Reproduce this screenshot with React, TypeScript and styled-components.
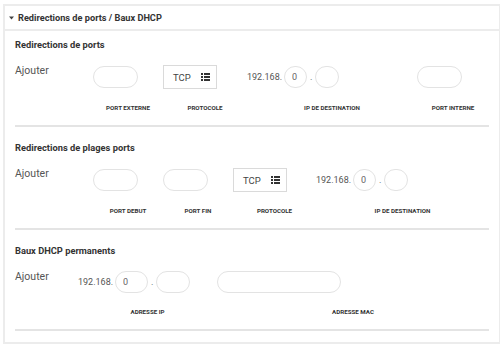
import React from "react";
import styled, { createGlobalStyle } from "styled-components";

const Global = createGlobalStyle`
  html, body { margin: 0; padding: 0; background: #fff; }
  body { font-family: Roboto, "Liberation Sans", Arial, sans-serif; color: #333; }
  * { box-sizing: border-box; }
`;

const Panel = styled.section`
  margin: 4px 0 0 3px;
  width: 498px;
  border: 2px solid #ececec;
  background: #fff;
`;

const PanelHeader = styled.header`
  display: flex;
  align-items: center;
  gap: 4px;
  height: 25px;
  padding-left: 4px;
  border-bottom: 2px solid #ececec;
  font-size: 9.2px;
  font-weight: 700;
  color: #333;
`;

const PanelBody = styled.div`
  padding: 0 10px 11px;
`;

const Section = styled.div`
  padding: 15px 0 13px;
  border-bottom: 2px solid #e4e4e4;
  &:first-child { padding-top: 8px; }
`;

const SectionTitle = styled.h3`
  margin: 0 0 14px;
  font-size: 9.3px;
  line-height: 12px;
  font-weight: 700;
  color: #333;
`;

const FormGrid = styled.div<{ $cols: string }>`
  display: grid;
  grid-template-columns: ${(p) => p.$cols};
  row-gap: 15px;
  align-items: center;
`;

const AddLabel = styled.div`
  align-self: start;
  font-size: 10.5px;
  line-height: 13px;
  color: #555;
  margin-top: -1px;
`;

const Cell = styled.div`
  justify-self: start;
  display: flex;
  align-items: center;
`;

const ColLabel = styled.div`
  justify-self: center;
  font-size: 6.2px;
  line-height: 8px;
  font-weight: 700;
  text-transform: uppercase;
  color: #333;
  white-space: nowrap;
`;

const Pill = styled.input<{ $w: number }>`
  width: ${(p) => p.$w}px;
  height: 22px;
  border: 1px solid #e3e3e3;
  border-radius: 11px;
  background: #fff;
  padding: 0 0 0 7px;
  font-family: inherit;
  font-size: 9px;
  color: #666;
  outline: none;
`;

const SelectBox = styled.div`
  width: 54px;
  height: 24px;
  border: 1px solid #dadada;
  display: flex;
  align-items: center;
  justify-content: space-between;
  padding: 0 6px 0 9px;
  font-size: 9.5px;
  color: #444;
`;

const Prefix = styled.span`
  font-size: 9px;
  color: #555;
  margin-right: 2px;
`;

const Dot = styled.span`
  font-size: 9px;
  color: #555;
  margin: 0 3px;
`;

const Caret = () => (
  <svg width="5" height="4" viewBox="0 0 5 4">
    <polygon points="0,0.5 5,0.5 2.5,3.5" fill="#444" />
  </svg>
);

const ListIcon = () => (
  <svg width="9" height="8" viewBox="0 0 9 8">
    <rect x="0" y="0" width="2" height="2" fill="#333" />
    <rect x="3" y="0" width="6" height="2" fill="#333" />
    <rect x="0" y="3" width="2" height="2" fill="#333" />
    <rect x="3" y="3" width="6" height="2" fill="#333" />
    <rect x="0" y="6" width="2" height="2" fill="#333" />
    <rect x="3" y="6" width="6" height="2" fill="#333" />
  </svg>
);

const Protocol = () => (
  <SelectBox>
    <span>TCP</span>
    <ListIcon />
  </SelectBox>
);

const IpField = ({ w }: { w: number }) => (
  <Cell>
    <Prefix>192.168.</Prefix>
    <Pill $w={w} readOnly defaultValue="0" />
    <Dot>.</Dot>
    <Pill $w={w + 1} readOnly defaultValue="" />
  </Cell>
);

export default function App() {
  return (
    <>
      <Global />
      <Panel>
        <PanelHeader>
          <Caret />
          <span>Redirections de ports / Baux DHCP</span>
        </PanelHeader>
        <PanelBody>
          <Section>
            <SectionTitle>Redirections de ports</SectionTitle>
            <FormGrid $cols="78px 70px 84px 170px 1fr">
              <AddLabel>Ajouter</AddLabel>
              <Cell><Pill $w={45} readOnly /></Cell>
              <Cell><Protocol /></Cell>
              <IpField w={23} />
              <Cell><Pill $w={45} readOnly /></Cell>
              <span />
              <ColLabel>Port externe</ColLabel>
              <ColLabel>Protocole</ColLabel>
              <ColLabel>IP de destination</ColLabel>
              <ColLabel>Port interne</ColLabel>
            </FormGrid>
          </Section>
          <Section>
            <SectionTitle>Redirections de plages ports</SectionTitle>
            <FormGrid $cols="78px 70px 70px 83px 1fr">
              <AddLabel>Ajouter</AddLabel>
              <Cell><Pill $w={45} readOnly /></Cell>
              <Cell><Pill $w={45} readOnly /></Cell>
              <Cell><Protocol /></Cell>
              <IpField w={23} />
              <span />
              <ColLabel>Port debut</ColLabel>
              <ColLabel>Port fin</ColLabel>
              <ColLabel>Protocole</ColLabel>
              <ColLabel>IP de destination</ColLabel>
            </FormGrid>
          </Section>
          <Section>
            <SectionTitle>Baux DHCP permanents</SectionTitle>
            <FormGrid $cols="63px 139px 1fr">
              <AddLabel>Ajouter</AddLabel>
              <IpField w={33} />
              <Cell><Pill $w={124} readOnly /></Cell>
              <span />
              <ColLabel>Adresse IP</ColLabel>
              <ColLabel>Adresse MAC</ColLabel>
            </FormGrid>
          </Section>
        </PanelBody>
      </Panel>
    </>
  );
}
